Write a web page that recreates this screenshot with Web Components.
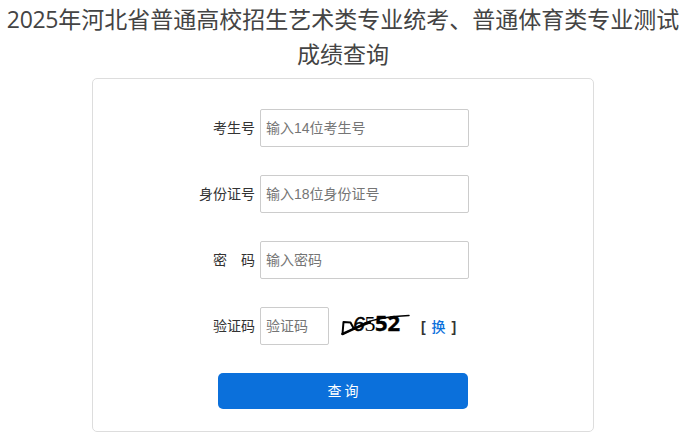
<!DOCTYPE html>
<html lang="zh-CN">
<head>
<meta charset="utf-8">
<title>成绩查询</title>
<style>
    body {
        margin: 0;
        background: #fff;
        color: #333;
        font: 14px/20px "Liberation Sans", "Noto Sans CJK SC", sans-serif;
    }
</style>
</head>
<body>
<score-page>
    <page-title slot="title"><span slot="year">2025</span>年河北省普通高校招生艺术类专业统考、普通体育类专业测试成绩查询</page-title>
    <query-form>
        <form-row label="考生号"><text-field hint="输入14位考生号"></text-field></form-row>
        <form-row label="身份证号"><text-field hint="输入18位身份证号"></text-field></form-row>
        <form-row label="密　码"><text-field type="password" hint="输入密码"></text-field></form-row>
        <form-row label="验证码">
            <text-field hint="验证码" style="--field-width: 69px"></text-field>
            <captcha-code></captcha-code>
        </form-row>
        <submit-button slot="action">查 询</submit-button>
    </query-form>
</score-page>

<script>
class ScorePage extends HTMLElement {
    constructor() {
        super();
        this.attachShadow({ mode: 'open' });
        this.shadowRoot.innerHTML = `
            <style>
                :host {
                    display: flex;
                    flex-direction: column;
                    align-items: center;
                    padding: 1px 4px 0 0;
                }
            </style>
            <slot name="title"></slot>
            <slot></slot>
        `;
    }
}

class PageTitle extends HTMLElement {
    constructor() {
        super();
        this.attachShadow({ mode: 'open' });
        this.shadowRoot.innerHTML = `
            <style>
                :host {
                    display: block;
                    width: 678px;
                    color: #444;
                    font: 23px/34px "Noto Sans CJK SC", sans-serif;
                    text-align: center;
                }

                ::slotted(span) {
                    font-family: "Open Sans", sans-serif;
                    letter-spacing: -0.3px;
                }

                h1 {
                    margin: 0;
                    font: inherit;
                }
            </style>
            <h1><slot name="year"></slot><slot></slot></h1>
        `;
    }
}

class QueryForm extends HTMLElement {
    constructor() {
        super();
        this.attachShadow({ mode: 'open' });
        this.shadowRoot.innerHTML = `
            <style>
                :host {
                    display: block;
                    box-sizing: border-box;
                    width: 502px;
                    height: 354px;
                    margin-top: 8px;
                    padding: 30px 0 0 89px;
                    border: 1px solid #ddd;
                    border-radius: 5px;
                }

                form {
                    display: grid;
                    gap: 28px;
                }

                ::slotted(submit-button) {
                    margin-left: 36px;
                }
            </style>
            <form>
                <slot></slot>
                <slot name="action"></slot>
            </form>
        `;
    }
}

class FormRow extends HTMLElement {
    constructor() {
        super();
        this.attachShadow({ mode: 'open' });
        this.shadowRoot.innerHTML = `
            <style>
                :host {
                    display: flex;
                    align-items: center;
                    height: 38px;
                }

                label {
                    width: 73px;
                    margin-right: 5px;
                    text-align: right;
                    white-space: pre;
                }
            </style>
            <label>${this.getAttribute('label')}</label>
            <slot></slot>
        `;
    }
}

class TextField extends HTMLElement {
    constructor() {
        super();
        this.attachShadow({ mode: 'open' });
        this.shadowRoot.innerHTML = `
            <style>
                :host {
                    display: block;
                    width: var(--field-width, 209px);
                }

                input {
                    display: block;
                    box-sizing: border-box;
                    width: 100%;
                    height: 38px;
                    padding: 0 5px;
                    border: 1px solid #ccc;
                    border-radius: 2px;
                    outline: none;
                    background: #fff;
                    font: inherit;
                }

                input::placeholder {
                    color: #757575;
                }
            </style>
            <input type="${this.getAttribute('type') || 'text'}" placeholder="${this.getAttribute('hint')}">
        `;
    }
}

class CaptchaCode extends HTMLElement {
    constructor() {
        super();
        this.attachShadow({ mode: 'open' });
        this.shadowRoot.innerHTML = `
            <style>
                :host {
                    display: flex;
                    align-items: center;
                    margin-left: 7px;
                }

                svg {
                    display: block;
                    width: 80px;
                    height: 36px;
                    overflow: visible;
                }

                .refresh {
                    margin: 2px 0 0 5px;
                    font-weight: bold;
                    white-space: pre;
                    word-spacing: 2px;
                }

                a {
                    color: #0b70db;
                    font-weight: 500;
                    text-decoration: none;
                }
            </style>
            <svg viewBox="0 -2 80 36">
                <text x="17" y="21" font-family="Liberation Sans" font-size="21" font-style="italic" stroke="#000" stroke-width="0.5">6</text>
                <text x="28.5" y="21" font-family="Liberation Serif" font-size="22">5</text>
                <text x="39" y="21" font-family="Open Sans" font-size="22" font-weight="700" stroke="#000" stroke-width="0.4">5</text>
                <text x="51.5" y="21" font-family="Open Sans" font-size="22" font-weight="700" stroke="#000" stroke-width="0.4">2</text>
                <g fill="none" stroke="#000" stroke-linecap="round" stroke-linejoin="round">
                    <path d="M6.5 24 L7.5 12 L14.5 12.5 L18 19" stroke-width="2"/>
                    <path d="M6.5 24 C15 20.5 21 17 29 13 C36 10 46 7 73 5.5" stroke-width="1.5"/>
                    <path d="M6.5 24 C15 20.5 21 17 34 12" stroke-width="2.5"/>
                </g>
            </svg>
            <span class="refresh">[ <a href="#">换</a> ]</span>
        `;
    }
}

class SubmitButton extends HTMLElement {
    constructor() {
        super();
        this.attachShadow({ mode: 'open' });
        this.shadowRoot.innerHTML = `
            <style>
                :host {
                    display: block;
                    width: 250px;
                }

                button {
                    display: block;
                    width: 100%;
                    height: 36px;
                    padding: 0;
                    border: none;
                    border-radius: 5px;
                    background: #0b70db;
                    color: #fff;
                    font: inherit;
                    word-spacing: -1px;
                    cursor: pointer;
                }
            </style>
            <button type="button"><slot></slot></button>
        `;
    }
}

customElements.define('score-page', ScorePage);
customElements.define('page-title', PageTitle);
customElements.define('query-form', QueryForm);
customElements.define('form-row', FormRow);
customElements.define('text-field', TextField);
customElements.define('captcha-code', CaptchaCode);
customElements.define('submit-button', SubmitButton);
</script>
</body>
</html>
